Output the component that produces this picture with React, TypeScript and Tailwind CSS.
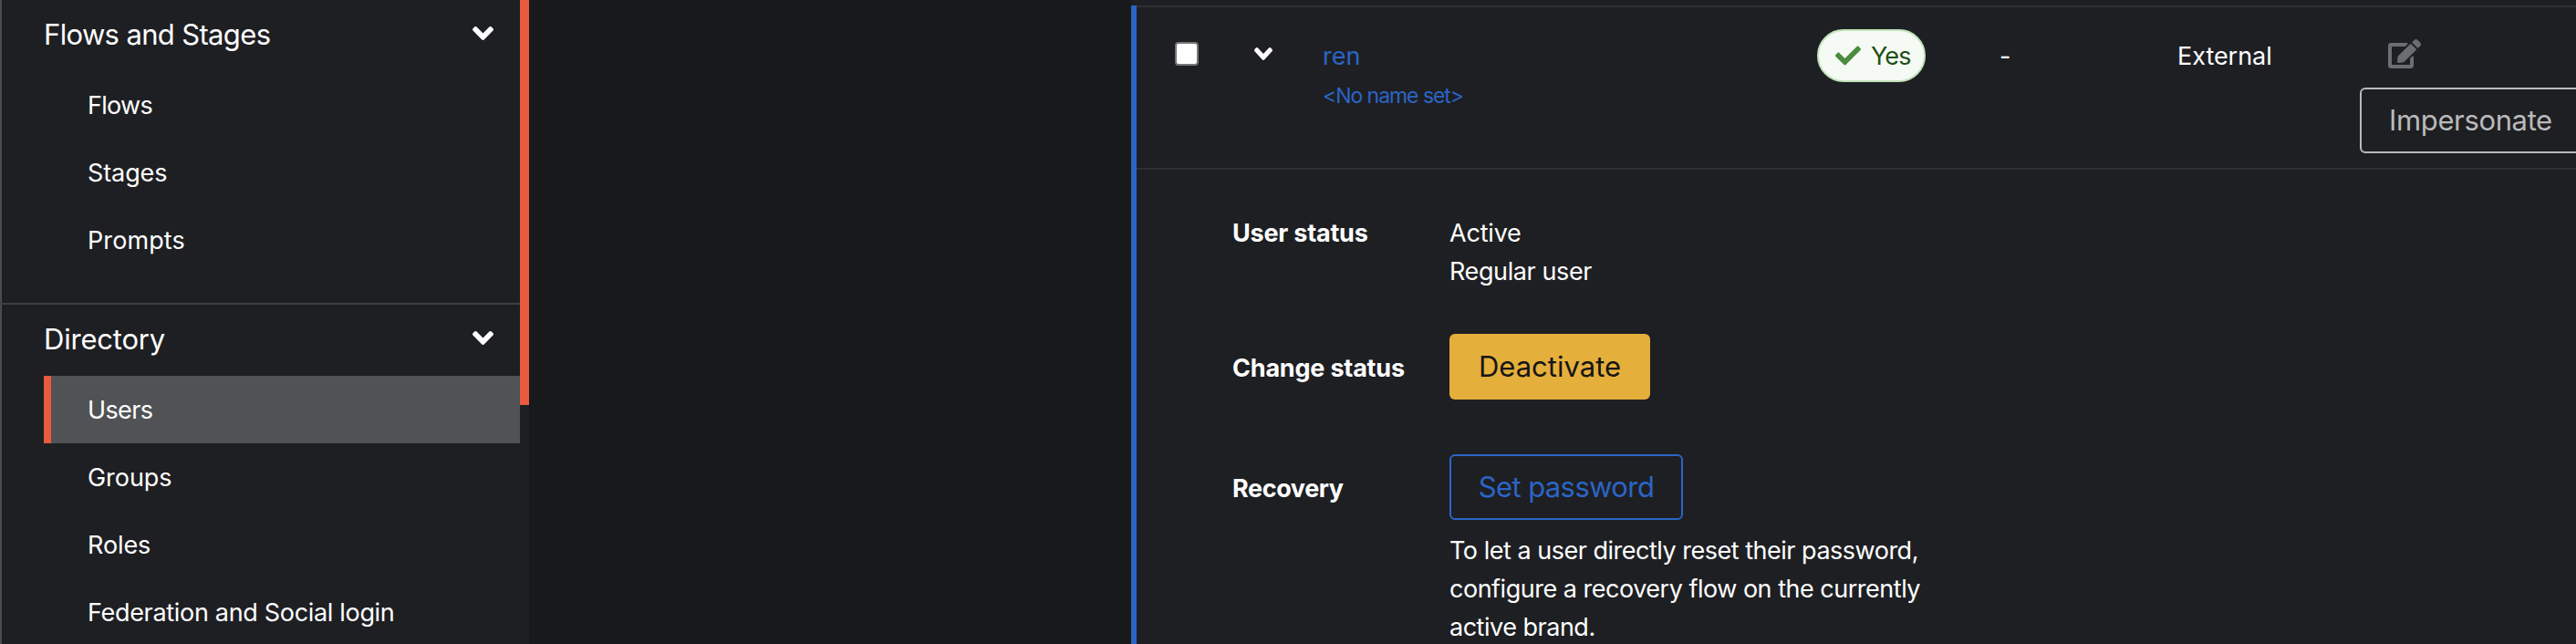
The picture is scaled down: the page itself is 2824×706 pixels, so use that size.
import type { ReactNode } from "react";
import { FaCheck, FaEdit } from "react-icons/fa";

function AngleDown({ className }: { className: string }) {
  return (
    <svg viewBox="0 153 320 206" preserveAspectRatio="none" fill="currentColor" className={className}>
      <path d="M143 352.3L7 216.3c-9.4-9.4-9.4-24.6 0-33.9l22.6-22.6c9.4-9.4 24.6-9.4 33.9 0l96.4 96.4 96.4-96.4c9.4-9.4 24.6-9.4 33.9 0l22.6 22.6c9.4 9.4 9.4 24.6 0 33.9l-136 136c-9.2 9.4-24.4 9.4-33.8 0z" />
    </svg>
  );
}

function Section({ title, tracking, children }: { title: string; tracking: string; children: ReactNode }) {
  return (
    <section>
      <button className="flex h-[78px] w-full items-center justify-between pr-[29px] pb-[2px] pl-12 text-left">
        <span className={`text-[31px] leading-[76px] ${tracking}`}>{title}</span>
        <AngleDown className="mb-1 h-[15px] w-[23px]" />
      </button>
      <ul>{children}</ul>
    </section>
  );
}

function NavItem({ label, tracking = "", active = false }: { label: string; tracking?: string; active?: boolean }) {
  return (
    <li className={`ml-12 h-[74px] border-l-8 pl-10 text-[27px] leading-[76px] ${active ? "border-[#ea5a3d] bg-[#515255]" : "border-transparent"}`}>
      <span className={tracking}>{label}</span>
    </li>
  );
}

function Detail({ label, labelClass, className, children }: { label: string; labelClass: string; className: string; children: ReactNode }) {
  return (
    <div className={`flex ${className}`}>
      <dt className={`w-[238px] shrink-0 font-bold leading-[42px] ${labelClass}`}>{label}</dt>
      <dd className="leading-[42px]">{children}</dd>
    </div>
  );
}

export default function App() {
  return (
    <div className="flex h-[706px] w-[2824px] overflow-hidden bg-[#18191a] font-['Inter',sans-serif] text-[27px] text-white">
      <nav className="flex h-full w-[580px] shrink-0 bg-[#1e1f23]">
        <div className="h-full w-[570px] border-l-2 border-[#4a4b4e]">
          <div className="-ml-[2px]">
            <div className="h-[334px] border-b-2 border-[#3d3e41]">
              <Section title="Flows and Stages" tracking="tracking-[-0.65px]">
                <NavItem label="Flows" tracking="tracking-[-0.7px]" />
                <NavItem label="Stages" tracking="tracking-[-0.1px]" />
                <NavItem label="Prompts" tracking="tracking-[0.1px]" />
              </Section>
            </div>
            <Section title="Directory" tracking="tracking-[-0.2px]">
              <NavItem label="Users" tracking="tracking-[-0.65px]" active />
              <NavItem label="Groups" tracking="tracking-[-0.05px]" />
              <NavItem label="Roles" tracking="tracking-[-0.1px]" />
              <NavItem label="Federation and Social login" tracking="tracking-[-0.32px]" />
            </Section>
          </div>
        </div>
        <div className="h-[444px] w-[10px] bg-[#ea5a3d]" />
      </nav>

      <main className="ml-[660px] h-full flex-1 bg-[#1e1f23] pt-[6px]">
        <div className="h-[700px] border-l-[6px] border-[#2b65c6]">
          <div className="flex h-[180px] border-y-2 border-[#2e2f33]">
            <div className="ml-[42px] mt-[38px] size-[26px] shrink-0 rounded-[4px] border-2 border-[#767676] bg-white" />
            <AngleDown className="mt-[44px] ml-[61px] h-[14px] w-[20px] shrink-0" />
            <div className="ml-[55px] w-[542px] shrink-0 pt-[33px] text-[#2b65c6]">
              <div className="leading-[42px]">ren</div>
              <div className="text-[23px] leading-[44px] tracking-[-1.05px]">&lt;No name set&gt;</div>
            </div>
            <div className="mt-6 flex h-[58px] w-[119px] shrink-0 items-center rounded-full border-2 border-[#c2e3bb] bg-[#f5faf4] pl-[18px] text-[#1e4f18]">
              <FaCheck className="size-[28px] text-[#4d8b3f]" />
              <span className="ml-[11px] pt-[2px] tracking-[-0.9px]">Yes</span>
            </div>
            <div className="ml-[81px] w-[195px] shrink-0 pt-[33px] leading-[42px]">-</div>
            <div className="w-[200px] shrink-0 pt-[33px] leading-[42px] tracking-[-0.05px]">External</div>
            <div className="w-[237px] shrink-0 overflow-hidden">
              <FaEdit className="mt-[35px] ml-[31px] h-8 w-9 text-[#6a6e73]" />
              <button className="mt-[21px] h-[72px] w-[245px] rounded-[6px] border-2 border-[#bababa] pl-[30px] text-left text-[31px] leading-[68px] tracking-[-0.36px] text-[#bababa]">
                Impersonate
              </button>
            </div>
          </div>

          <dl className="pt-[49px] pl-[105px]">
            <Detail label="User status" labelClass="tracking-[-0.22px]" className="">
              <div className="tracking-[-0.19px]">Active</div>
              <div className="tracking-[-0.4px]">Regular user</div>
            </Detail>
            <Detail label="Change status" labelClass="pt-[3px] tracking-[-0.2px]" className="mt-[47px] items-center">
              <button className="block h-[72px] w-[220px] rounded-[6px] bg-[#e5af3b] text-[31px] text-[#151515]">Deactivate</button>
            </Detail>
            <Detail label="Recovery" labelClass="pt-[17px] tracking-[-0.4px]" className="mt-[60px]">
              <button className="block h-[72px] w-[256px] rounded-[6px] border-2 border-[#2b65c6] text-[31px] tracking-[-0.6px] text-[#2b65c6]">
                Set password
              </button>
              <div className="mt-[13px] whitespace-nowrap tracking-[-0.49px]">
                To let a user directly reset their password,
                <br />
                configure a recovery flow on the currently
                <br />
                active brand.
              </div>
            </Detail>
          </dl>
        </div>
      </main>
    </div>
  );
}
